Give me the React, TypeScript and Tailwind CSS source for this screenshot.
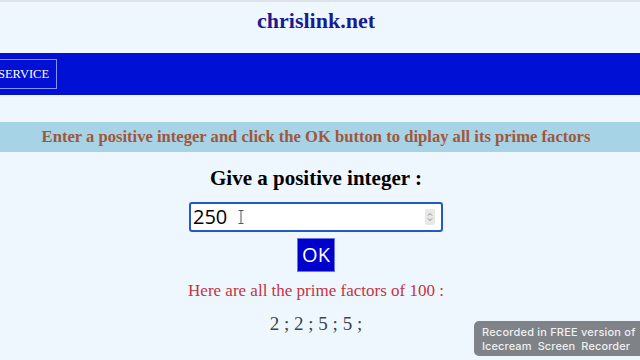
export default function App() {
  return (
    <div className="relative h-[360px] w-[640px] overflow-hidden bg-[#eff7fe] pr-[8px] font-['Liberation_Serif',serif]">
      <div className="-mr-[8px] h-[2px] bg-[#dfe4ea]" />
      <div className="flex h-[51px] items-start justify-center pt-[5px]">
        <h1 className="text-[22px] font-bold leading-[27px] text-[#1b1b8f]">chrislink.net</h1>
      </div>

      <nav className="-mr-[8px] flex h-[42px] items-center bg-[#0010d4]">
        <div className="-ml-[25px] flex h-[30px] items-center border border-[#8a94ff] pl-[22px] pr-[7px] text-[12.5px] text-white">
          SERVICE
        </div>
      </nav>

      <div className="-mr-[8px] mt-[27px] flex h-[30px] items-center justify-center bg-[#a7d3e7] pr-[8px]">
        <p className="text-[16.6px] font-bold text-[#a0573a]">
          Enter a positive integer and click the OK button to diplay all its prime factors
        </p>
      </div>

      <div className="flex flex-col items-center">
        <h2 className="mt-[13px] text-[21px] font-bold leading-[27px] text-black">Give a positive integer :</h2>

        <div className="relative mt-[10px] flex h-[30px] w-[254px] items-center rounded-[3px] border-2 border-[#2458c6] bg-white pl-[2px] pr-[6px]">
          <span className="font-['Open_Sans',sans-serif] text-[20px] leading-none text-black">250</span>
          <svg className="absolute left-[47px] top-[6px]" width="6" height="14" viewBox="0 0 6 14">
            <path d="M0.5 0.5h5M3 0.5v13M0.5 13.5h5" stroke="#555" strokeWidth="1" fill="none" />
          </svg>
          <div className="ml-auto flex h-[16px] w-[10px] flex-col items-center justify-center rounded-[2px] bg-[#e8e8e8]">
            <svg width="6" height="12" viewBox="0 0 6 12">
              <path d="M1 4.5L3 2.5L5 4.5M1 7.5L3 9.5L5 7.5" stroke="#8a8a8a" strokeWidth="1" fill="none" />
            </svg>
          </div>
        </div>

        <button className="mt-[6px] flex h-[34px] w-[38px] items-center justify-center border border-[#6b74e6] bg-[#0000cc] font-['Open_Sans',sans-serif] text-[20px] text-white">
          OK
        </button>

        <p className="mt-[8px] text-[17px] leading-[21px] text-[#c4343f]">Here are all the prime factors of 100 :</p>
        <p className="mt-[11px] text-[19px] leading-[23px] text-[#3f4448]">2 ; 2 ; 5 ; 5 ;</p>
      </div>

      <div className="absolute left-[474px] top-[321px] flex h-[35px] w-[180px] flex-col justify-center rounded-[5px] bg-[#7f8286] pl-[8px] font-['Inter',sans-serif] text-[11px] font-medium leading-[14px] text-[#eef0f2]">
        <span className="tracking-[0.2px]">Recorded in FREE version of</span>
        <span className="tracking-[0.1px]">Icecream&nbsp; Screen&nbsp; Recorder</span>
      </div>
    </div>
  );
}
